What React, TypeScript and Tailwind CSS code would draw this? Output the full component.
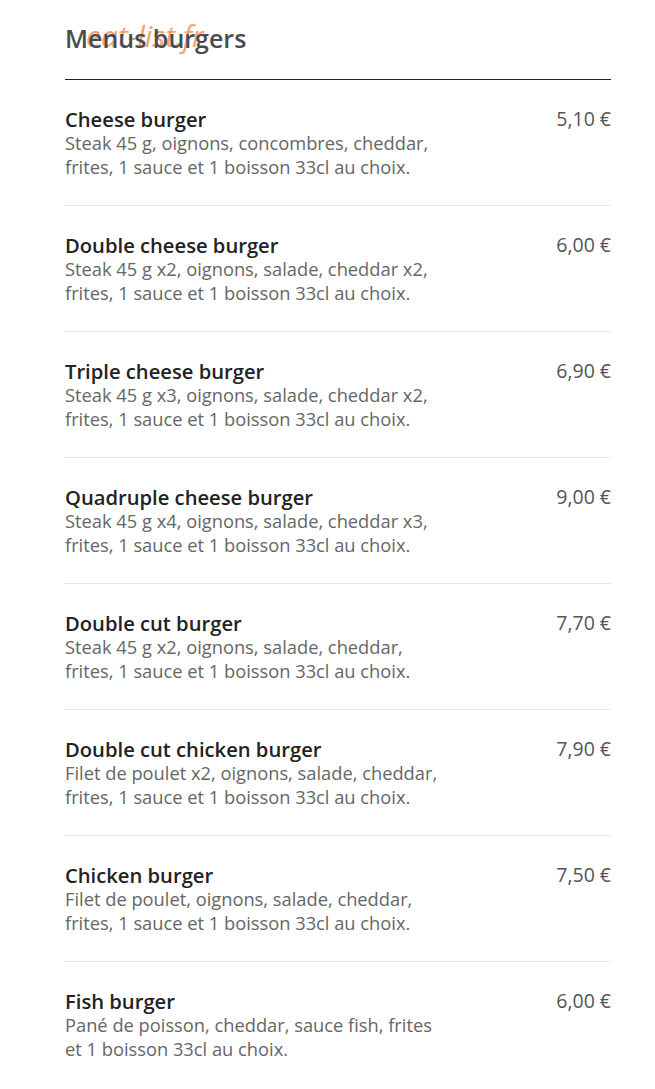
import React from "react";

const items = [
  { name: "Cheese burger", price: "5,10 €", desc: ["Steak 45 g, oignons, concombres, cheddar,", "frites, 1 sauce et 1 boisson 33cl au choix."] },
  { name: "Double cheese burger", price: "6,00 €", desc: ["Steak 45 g x2, oignons, salade, cheddar x2,", "frites, 1 sauce et 1 boisson 33cl au choix."] },
  { name: "Triple cheese burger", price: "6,90 €", desc: ["Steak 45 g x3, oignons, salade, cheddar x2,", "frites, 1 sauce et 1 boisson 33cl au choix."] },
  { name: "Quadruple cheese burger", price: "9,00 €", desc: ["Steak 45 g x4, oignons, salade, cheddar x3,", "frites, 1 sauce et 1 boisson 33cl au choix."] },
  { name: "Double cut burger", price: "7,70 €", desc: ["Steak 45 g x2, oignons, salade, cheddar,", "frites, 1 sauce et 1 boisson 33cl au choix."] },
  { name: "Double cut chicken burger", price: "7,90 €", desc: ["Filet de poulet x2, oignons, salade, cheddar,", "frites, 1 sauce et 1 boisson 33cl au choix."] },
  { name: "Chicken burger", price: "7,50 €", desc: ["Filet de poulet, oignons, salade, cheddar,", "frites, 1 sauce et 1 boisson 33cl au choix."] },
  { name: "Fish burger", price: "6,00 €", desc: ["Pané de poisson, cheddar, sauce fish, frites", "et 1 boisson 33cl au choix."] },
];

export default function App() {
  return (
    <main className="min-h-screen bg-white pl-[65px] pr-[44px] pt-[20px] font-['Open_Sans',sans-serif]">
      <div className="relative border-b border-[#222] pb-[23px]">
        <span className="absolute left-[21px] top-[1px] text-[30px] leading-[30px] italic text-[#f08a4b]/80">eat-list.fr</span>
        <h1 className="relative text-[25px] leading-[36px] font-semibold text-[#474c52]">Menus burgers</h1>
      </div>
      <ul>
        {items.map((item, i) => (
          <li
            key={item.name}
            className={`flex justify-between pt-[27px] pb-[26px] ${i < items.length - 1 ? "border-b border-[#e6e6e6]" : ""}`}
          >
            <div>
              <h2 className="text-[20.2px] leading-[24px] font-semibold text-[#222]">{item.name}</h2>
              <p className="text-[18.3px] leading-[24px] text-[#666]">
                {item.desc[0]}
                <br />
                {item.desc[1]}
              </p>
            </div>
            <span className="text-[19.5px] leading-[24px] text-[#555]">{item.price}</span>
          </li>
        ))}
      </ul>
    </main>
  );
}
